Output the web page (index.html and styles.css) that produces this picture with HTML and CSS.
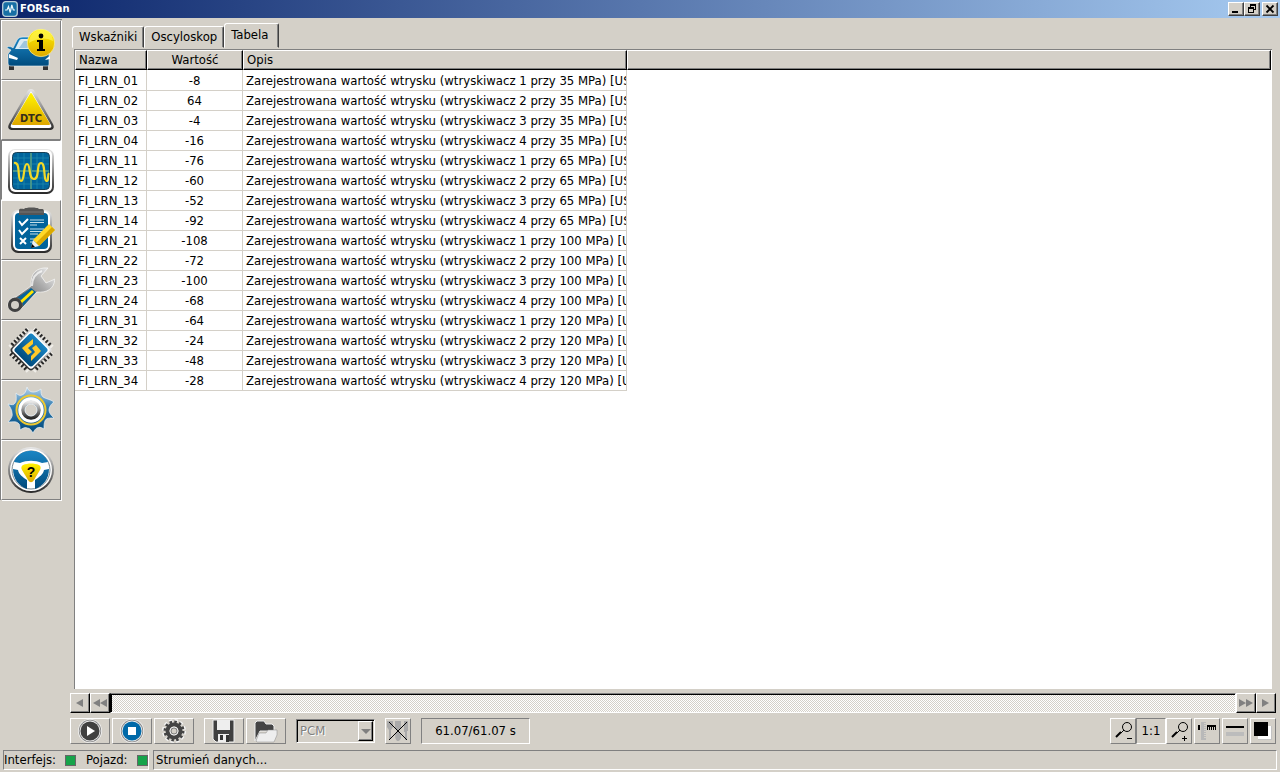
FILE: index.html
```html
<!DOCTYPE html>
<html lang="pl">
<head>
<meta charset="utf-8">
<title>FORScan</title>
<link rel="stylesheet" href="styles.css">
</head>
<body>
<header class="titlebar">
  <svg class="app-logo" viewBox="0 0 16 16"><rect x=".7" y=".7" width="14.6" height="14.6" rx="3" fill="#176fa5" stroke="#b9cdd8" stroke-width="1.3"/><path d="M3 9h2l1.500-3.500 1.700 6 1.600-7.500 1.500 5H13" fill="none" stroke="#e9f6fb" stroke-width="1.200"/></svg>
  <h1>FORScan</h1>
  <div class="window-controls">
    <button class="win-btn" aria-label="Minimalizuj"><svg viewBox="0 0 12 10"><path d="M2 7h6v2H2z"/></svg></button>
    <button class="win-btn" aria-label="Przywróć"><svg viewBox="0 0 12 10"><path d="M4 0h6v6H8V5h1V2H5v1H4zM2 3h6v6H2zm1 2v3h4V5z" fill-rule="evenodd"/></svg></button>
    <button class="win-btn close" aria-label="Zamknij"><svg viewBox="0 0 12 10"><path d="M2.500 1.500l7 7m0-7l-7 7" stroke="#000" stroke-width="1.800"/></svg></button>
  </div>
</header>
<svg class="defs" aria-hidden="true">
  <defs>
    <linearGradient id="blue" x1="0" y1="0" x2="0" y2="1"><stop offset="0" stop-color="#1a85c4"/><stop offset="1" stop-color="#004b7d"/></linearGradient>
    <linearGradient id="metal" x1="0" y1="0" x2="0" y2="1"><stop offset="0" stop-color="#e8e8e8"/><stop offset=".5" stop-color="#888"/><stop offset="1" stop-color="#282828"/></linearGradient>
    <linearGradient id="yellow" x1="0" y1="0" x2="0" y2="1"><stop offset="0" stop-color="#fff200"/><stop offset="1" stop-color="#dfa900"/></linearGradient>
    <linearGradient id="gearblue" x1="0" y1="0" x2="0" y2="1"><stop offset="0" stop-color="#b4d2ea"/><stop offset=".45" stop-color="#2d79ae"/><stop offset="1" stop-color="#00477a"/></linearGradient>
    <linearGradient id="wrench" x1="0" y1="1" x2="1" y2="0"><stop offset="0" stop-color="#222"/><stop offset=".45" stop-color="#888"/><stop offset=".65" stop-color="#aaa"/><stop offset="1" stop-color="#f4f4f4"/></linearGradient>
  </defs>
</svg>
<div class="workspace">
  <nav class="sidebar">
    <button class="side-btn" aria-label="Pojazd">
      <svg viewBox="0 0 48 48"><path d="M2 37h5v7H2zM36 37h5v7h-5z" fill="#333"/><path d="M0 22c0-2 4-2 6 0l4-8c1-2 3-3 6-3h14c4 0 6 2 7 5l5 12v10c0 2-1 2-3 2H4c-2 0-3-1-3-3v-9l3-4z" fill="url(#blue)" stroke="#eef5f9" stroke-width=".6"/><path d="M8 23l4-8c1-2 2-2 4-2h13c3 0 4 2 5 4l2 6z" fill="#dcebf3"/><path d="M12 22l5-7h9v7z" fill="#9fc6de"/><path d="M2 28l9 4-1 2-8-2z" fill="#fff"/><path d="M40 32l3-2v3l-5 1z" fill="#fff"/><circle cx="34" cy="17" r="13.700" fill="url(#yellow)" stroke="#fff8b0" stroke-width=".6"/><path d="M22 17c0-17 24-17 24-2-8-4-16-3-24 2" fill="#fff65b" opacity=".65"/><circle cx="34" cy="10" r="2.400"/><path d="M30 14h6v9h2v2h-8v-2h2v-7h-2z"/></svg>
    </button>
    <button class="side-btn" aria-label="Kody usterek DTC">
      <svg viewBox="0 0 48 48"><path d="M24 3c2 0 3 1 4 3l18 32c2 4 0 6-4 6H6c-4 0-6-2-4-6L20 6c1-2 2-3 4-3z" fill="url(#metal)"/><path d="M24 5L44 39c1 2 0 3-2 3H6c-2 0-3-1-2-3z" fill="#fff"/><path d="M24 8l18 30H6z" fill="url(#yellow)" stroke="url(#yellow)" stroke-width="2" stroke-linejoin="round"/><text x="24" y="36" class="dtc-label">DTC</text></svg>
    </button>
    <button class="side-btn active" aria-label="Strumień danych">
      <svg viewBox="0 0 48 48"><rect x="1" y="3" width="46" height="45" rx="7" fill="url(#metal)"/><rect x="3" y="4" width="42" height="42" rx="5" fill="#fff"/><rect x="5.500" y="6.500" width="37" height="37" rx="4" fill="#00649c" stroke="#173f55"/><path d="M11 7v36M17 7v36M30 7v36M36 7v36M6 12h36M6 18h36M6 32h36M6 38h36" stroke="#208cb0" stroke-width=".7"/><path d="M24 7v36M6 25h36" stroke="#44948b" stroke-width="2"/><path d="M7 17c7-2 3 18 7 18s2-17 6-17 1 15 7 15 2-16 7-16 2 18 6 18c2 0 0-6 2-8" fill="none" stroke="#f3d927" stroke-width="2.200"/></svg>
    </button>
    <button class="side-btn" aria-label="Testy">
      <svg viewBox="0 0 48 48"><rect x="4" y="4" width="41" height="43" rx="7" fill="url(#metal)"/><rect x="6" y="5" width="37" height="40" rx="6" fill="#fff"/><rect x="8" y="7" width="33" height="36" rx="4" fill="#00639b"/><path d="M12 5c0-3 2-2 5-2 1-2 14-2 15 0 3 0 5-1 5 3v3H12z" fill="#555"/><path d="M12 6h25" stroke="#777"/><path d="M12 15l3 4 6-6M12 24l3 4 6-6M13 32l6 6m0-6l-6 6" fill="none" stroke="#fff" stroke-width="2"/><path d="M23 14h14M23 16.500h14M23 19h7M23 23h14M23 25.500h14M23 28h8M23 33h6M23 36h3" stroke="#c5dfe8"/><path d="M42 18l6 6-16 16-6-6z" fill="#ffd928"/><path d="M45 21l3 3-16 16-3-3z" fill="#dba900"/><path d="M26 34l6 6-8 2z" fill="#eee"/><path d="M25 38l3 3-4 1z"/></svg>
    </button>
    <button class="side-btn" aria-label="Serwis">
      <svg viewBox="0 0 48 48"><path d="M24 20C23 7 30 1 41 2l-7 8 5 7 9-4C47 23 40 27 30 26L15 42C10 48 1 46 1 39c0-5 4-8 8-8z" fill="url(#wrench)" stroke="#f8f8f8" stroke-width=".7"/><path d="M24 22l5 4-13 14c0-6-3-8-6-8z" fill="#06639a"/><path d="M25 24l2 2-12 11-2-2z" fill="#ffe500"/><circle cx="8" cy="39" r="7" fill="#414141"/><circle cx="8" cy="39" r="4" fill="#d4d0c8"/><path d="M25 20c0-9 4-13 10-15" fill="none" stroke="#fff" stroke-width="2" opacity=".7"/></svg>
    </button>
    <button class="side-btn" aria-label="Konfiguracja modułów">
      <svg viewBox="0 0 48 48"><g transform="rotate(45 24 24)"><path d="M11 7h27M11 41h27M7 11v27M41 11v27" stroke="#f0eee9" stroke-width="4" stroke-dasharray="2 2"/><path d="M12 7h24M12 41h24M7 12v24M41 12v24" stroke="#292929" stroke-width="4" stroke-dasharray="2 2"/><rect x="8.500" y="8.500" width="31" height="31" rx="4" fill="url(#metal)"/><rect x="10" y="10" width="28" height="28" rx="3" fill="#fff"/><rect x="11.500" y="11.500" width="25" height="25" rx="3" fill="url(#blue)"/></g><path d="M26 13v5l-5 4 4 4-4 3-6-7zM24 35v-5l4-4-3-4 4-3 5 6z" fill="#ffc928"/></svg>
    </button>
    <button class="side-btn" aria-label="Ustawienia">
      <svg viewBox="0 0 48 48"><path d="M20 1c1 3 3 5 6 5 3 0 5-1 8-3 0 4 0 6 2 8 3 2 7 2 11 5-3 2-5 5-5 8s2 5 5 8c-5 0-8 0-9 3-1 2-1 5-1 8-3-2-5-2-7-1-2 1-3 3-4 5-2-3-3-5-6-5-2-1-4 0-7 2 0-3 0-6-2-7-2-2-6-1-10-1 3-3 5-6 4-9 0-3-2-6-4-9 4 1 6 1 7-1 2-2 1-6 1-10 2 2 4 3 6 2 3-1 4-4 5-8z" fill="url(#gearblue)" stroke="#e8f1f6" stroke-width=".7" stroke-linejoin="round"/><circle cx="24" cy="24" r="14.500" fill="none" stroke="#efc92e" stroke-width="2"/><circle cx="24" cy="24" r="11" fill="none" stroke="#fff" stroke-width="3.500"/><circle cx="24" cy="24" r="8" fill="none" stroke="url(#metal)" stroke-width="3.500"/><circle cx="24" cy="24" r="6" fill="#d4d0c8" stroke="#eee"/></svg>
    </button>
    <button class="side-btn" aria-label="Pomoc">
      <svg viewBox="0 0 48 48"><circle cx="24" cy="24" r="23" fill="url(#metal)"/><circle cx="24" cy="24" r="21" fill="#fff"/><circle cx="24" cy="24" r="19" fill="#fff" stroke="#7a8890"/><path d="M7 16C13 1 35 1 41 16l-6 1c-7-3-15-3-22 0zM6 23l5 1c1 5 5 7 9 10v9C12 40 6 33 6 23zM42 23l-5 1c-1 5-5 7-9 10v9c8-3 14-10 14-20z" fill="url(#blue)"/><path d="M16 19c5-2 11-2 16 0 2 1 2 3 1 5l-6 10c-2 3-4 3-6 0l-6-10c-1-2-1-4 1-5z" fill="url(#yellow)"/><text x="24" y="31" class="help-label">?</text></svg>
    </button>
  </nav>
  <main class="content">
    <div class="tabs" role="tablist">
      <button class="tab" role="tab">Wskaźniki</button><button class="tab" role="tab">Oscyloskop</button><button class="tab selected" role="tab" aria-selected="true">Tabela</button>
    </div>
    <section class="data-panel">
      <table>
        <colgroup><col class="name-col"><col class="value-col"><col class="description-col"><col></colgroup>
        <thead><tr><th>Nazwa</th><th class="value">Wartość</th><th>Opis</th><th class="blank"></th></tr></thead>
        <tbody>
          <tr><td>FI_LRN_01</td><td class="value">-8</td><td>Zarejestrowana wartość wtrysku (wtryskiwacz 1 przy 35 MPa) [US]</td></tr>
          <tr><td>FI_LRN_02</td><td class="value">64</td><td>Zarejestrowana wartość wtrysku (wtryskiwacz 2 przy 35 MPa) [US]</td></tr>
          <tr><td>FI_LRN_03</td><td class="value">-4</td><td>Zarejestrowana wartość wtrysku (wtryskiwacz 3 przy 35 MPa) [US]</td></tr>
          <tr><td>FI_LRN_04</td><td class="value">-16</td><td>Zarejestrowana wartość wtrysku (wtryskiwacz 4 przy 35 MPa) [US]</td></tr>
          <tr><td>FI_LRN_11</td><td class="value">-76</td><td>Zarejestrowana wartość wtrysku (wtryskiwacz 1 przy 65 MPa) [US]</td></tr>
          <tr><td>FI_LRN_12</td><td class="value">-60</td><td>Zarejestrowana wartość wtrysku (wtryskiwacz 2 przy 65 MPa) [US]</td></tr>
          <tr><td>FI_LRN_13</td><td class="value">-52</td><td>Zarejestrowana wartość wtrysku (wtryskiwacz 3 przy 65 MPa) [US]</td></tr>
          <tr><td>FI_LRN_14</td><td class="value">-92</td><td>Zarejestrowana wartość wtrysku (wtryskiwacz 4 przy 65 MPa) [US]</td></tr>
          <tr><td>FI_LRN_21</td><td class="value">-108</td><td>Zarejestrowana wartość wtrysku (wtryskiwacz 1 przy 100 MPa) [US]</td></tr>
          <tr><td>FI_LRN_22</td><td class="value">-72</td><td>Zarejestrowana wartość wtrysku (wtryskiwacz 2 przy 100 MPa) [US]</td></tr>
          <tr><td>FI_LRN_23</td><td class="value">-100</td><td>Zarejestrowana wartość wtrysku (wtryskiwacz 3 przy 100 MPa) [US]</td></tr>
          <tr><td>FI_LRN_24</td><td class="value">-68</td><td>Zarejestrowana wartość wtrysku (wtryskiwacz 4 przy 100 MPa) [US]</td></tr>
          <tr><td>FI_LRN_31</td><td class="value">-64</td><td>Zarejestrowana wartość wtrysku (wtryskiwacz 1 przy 120 MPa) [US]</td></tr>
          <tr><td>FI_LRN_32</td><td class="value">-24</td><td>Zarejestrowana wartość wtrysku (wtryskiwacz 2 przy 120 MPa) [US]</td></tr>
          <tr><td>FI_LRN_33</td><td class="value">-48</td><td>Zarejestrowana wartość wtrysku (wtryskiwacz 3 przy 120 MPa) [US]</td></tr>
          <tr><td>FI_LRN_34</td><td class="value">-28</td><td>Zarejestrowana wartość wtrysku (wtryskiwacz 4 przy 120 MPa) [US]</td></tr>
        </tbody>
      </table>
    </section>
    <div class="timeline">
      <button class="scroll-btn" aria-label="Wstecz"><svg viewBox="0 0 16 16"><path d="M11 4v8L4 8z"/></svg></button>
      <button class="scroll-btn" aria-label="Szybko wstecz"><svg viewBox="0 0 16 16"><path d="M8 4v8L1 8zM15 4v8L8 8z"/></svg></button>
      <div class="track"></div>
      <button class="scroll-btn" aria-label="Szybko naprzód"><svg viewBox="0 0 16 16"><path d="M1 4v8l7-4zM8 4v8l7-4z"/></svg></button>
      <button class="scroll-btn" aria-label="Naprzód"><svg viewBox="0 0 16 16"><path d="M4 4v8l7-4z"/></svg></button>
    </div>
    <div class="toolbar">
      <div class="group">
        <button class="tool" aria-label="Start"><svg viewBox="0 0 24 24"><circle cx="12" cy="12" r="12" fill="#f4f4f4"/><circle cx="12" cy="12" r="11.200" fill="#888"/><circle cx="12" cy="12" r="10.400" fill="#eee"/><circle cx="12" cy="12" r="9.500" fill="#404040"/><path d="M9 7v10l8-5z" fill="#fff"/></svg></button>
        <button class="tool" aria-label="Stop"><svg viewBox="0 0 24 24"><circle cx="12" cy="12" r="12" fill="#f4f4f4"/><circle cx="12" cy="12" r="11.200" fill="#888"/><circle cx="12" cy="12" r="10.400" fill="#eee"/><circle cx="12" cy="12" r="9.500" fill="#0069a8"/><path d="M8 8h8v8H8z" fill="#fff"/></svg></button>
        <button class="tool" aria-label="Opcje"><svg viewBox="0 0 24 24"><circle cx="12" cy="12" r="9.500" fill="none" stroke="#f4f4f4" stroke-width="5" stroke-dasharray="3 2"/><circle cx="12" cy="12" r="9" fill="none" stroke="#444" stroke-width="3" stroke-dasharray="2.500 2.212"/><circle cx="12" cy="12" r="6.500" fill="none" stroke="#444" stroke-width="4"/><circle cx="12" cy="12" r="4" fill="#777" stroke="#eee"/><circle cx="12" cy="12" r="2.500" fill="#d4d0c8"/></svg></button>
      </div>
      <div class="group">
        <button class="tool" aria-label="Zapisz"><svg viewBox="0 0 24 24"><path d="M1 1h21v22H4l-3-3z" fill="#404040" stroke="#eee"/><path d="M5 1h13v10H5zM6 15h11v8H6z" fill="#eee"/><path d="M8 16h3v5H8zM14 16h3v7h-3z" fill="#333"/></svg></button>
        <button class="tool" aria-label="Otwórz"><svg viewBox="0 0 24 24"><path d="M1 22V4l2-2h7l2 3h6l2 2v5H6z" fill="#444" stroke="#eee"/><path d="M2 22l3-8h7l2-3h9v5l-3 7H3z" fill="#eee" stroke="#888" stroke-width=".5"/></svg></button>
      </div>
      <div class="module-picker"><select aria-label="Moduł" disabled><option>PCM</option></select><span class="drop"><svg viewBox="0 0 12 12"><path d="M1 4h10L6 9z"/></svg></span></div>
      <button class="tool square" aria-label="Wyczyść zaznaczenie"><svg viewBox="0 0 24 24"><path d="M1 2h6v6L5 11v9H3v-9L1 8zM9 2h6v8h-2v2c4 3 2 10-1 10s-4-7-1-10v-2H9zM18 2h4v10h-1v9h-2v-8h-1z" fill="#aaa"/><path d="M3 3l18 18m0-18L3 21" stroke="#000"/></svg></button>
      <output class="time">61.07/61.07 s</output>
      <div class="view-tools">
        <button class="tool square" aria-label="Pomniejsz"><svg viewBox="0 0 24 24"><circle cx="16" cy="8" r="4.500" fill="none" stroke="#000"/><path d="M13 11l-3 3M16 19.500h5" stroke="#000"/><path d="M10 13l-5 5" stroke="#000" stroke-width="2"/></svg></button><button class="tool ratio" aria-pressed="true">1:1</button><button class="tool square" aria-label="Powiększ"><svg viewBox="0 0 24 24"><circle cx="16" cy="8" r="4.500" fill="none" stroke="#000"/><path d="M13 11l-3 3M15 19.500h5M17.500 17v5" stroke="#000"/><path d="M10 13l-5 5" stroke="#000" stroke-width="2"/></svg></button>
        <button class="tool square spaced" aria-label="Skala"><svg viewBox="0 0 24 24"><path d="M6 3h5v18H6z" fill="#b9b9b9"/><path d="M10 4v16" stroke="#d4d0c8" stroke-dasharray="1 1" stroke-width="2"/><path d="M3 6h2v5H3zM12 6h9v5h-1V8h-1v3h-1V8h-1v3h-1V8h-1v3h-1V8h-1v3h-1z"/></svg></button>
        <button class="tool square spaced" aria-label="Grubość linii"><svg viewBox="0 0 24 24"><path d="M3 7h18v2H3z"/><path d="M3 13h18v4H3z" fill="#bcbcbc"/></svg></button>
        <button class="tool square spaced" aria-label="Kolory"><svg viewBox="0 0 24 24"><path d="M7 7h14v14H7z" fill="#c3c3c3"/><path d="M7 7h13v13H7z" fill="#fff"/><path d="M3 3h14v14H3z"/></svg></button>
      </div>
    </div>
  </main>
</div>
<footer class="statusbar">
  <div class="status-cell devices"><span>Interfejs:</span><i class="lamp"></i><span>Pojazd:</span><i class="lamp"></i></div>
  <div class="status-cell message">Strumień danych...</div>
</footer>
</body>
</html>
```

FILE: styles.css
```css
* { box-sizing: border-box; }
body {
  margin: 0;
  height: 100vh;
  display: flex;
  flex-direction: column;
  background: #d4d0c8;
  color: #000;
  font: 13px/16px "DejaVu Sans Condensed", "DejaVu Sans", sans-serif;
}
button, select { font: inherit; color: inherit; margin: 0; padding: 0; border-radius: 0; }
svg { display: block; }
.defs { position: absolute; width: 0; height: 0; }
.titlebar {
  height: 18px;
  flex: none;
  display: flex;
  align-items: center;
  gap: 2px;
  padding: 0 2px;
  background: linear-gradient(90deg, #0a246a, #a6caf0);
}
.app-logo { width: 16px; height: 16px; }
.titlebar h1 { margin: 0; color: #fff; font-size: 11px; line-height: 16px; }
.window-controls { display: flex; margin-left: auto; }
.win-btn {
  width: 16px;
  height: 14px;
  display: grid;
  place-items: center;
  background: #d4d0c8;
  border: 1px solid;
  border-color: #fff #404040 #404040 #fff;
  box-shadow: inset -1px -1px #808080;
}
.win-btn svg { width: 12px; height: 10px; }
.win-btn.close { margin-left: 2px; }
.workspace { flex: 1; min-height: 0; display: flex; gap: 8px; }
.sidebar {
  width: 62px;
  flex: none;
  align-self: flex-start;
  margin-top: 1px;
  padding-left: 1px;
  border-top: 1px solid #808080;
  box-shadow: inset 1px 0 #808080;
}
.side-btn {
  width: 60px;
  height: 60px;
  display: grid;
  place-items: center;
  background: #d4d0c8;
  border: 1px solid;
  border-color: #fff #808080 #808080 #fff;
  box-shadow: 1px 1px #fff;
}
.side-btn svg { width: 48px; height: 48px; }
.side-btn.active { background: #fff; border-color: #808080 #fff #fff #808080; }
.dtc-label { font: bold 11px "DejaVu Sans Condensed", sans-serif; text-anchor: middle; fill: #332d1b; }
.help-label { font: bold 14px "Liberation Sans", sans-serif; text-anchor: middle; }
.content { flex: 1; min-width: 0; display: flex; flex-direction: column; }
.tabs { height: 31px; flex: none; display: flex; align-items: flex-end; padding: 0 0 1px 2px; }
.tab {
  height: 22px;
  padding: 0 6px;
  background: #d4d0c8;
  border: 1px solid;
  border-color: #fff #404040 transparent #fff;
  border-radius: 3px 2px 0 0;
  box-shadow: inset -1px 0 #808080;
}
.tab.selected { height: 25px; padding: 0 10px 2px 6px; }
.data-panel {
  flex: 1;
  min-height: 0;
  margin: 0 8px 0 4px;
  padding-right: 1px;
  overflow: hidden;
  background: #fff;
  border-top: 1px solid #808080;
  border-left: 1px solid #808080;
}
table { width: 100%; table-layout: fixed; border-collapse: separate; border-spacing: 0; }
.name-col { width: 72px; }
.value-col { width: 96px; }
.description-col { width: 384px; }
th, td { height: 20px; padding: 0 3px; line-height: 18px; text-align: left; white-space: nowrap; overflow: hidden; }
th {
  background: #d4d0c8;
  font-weight: normal;
  border: 1px solid;
  border-color: #fff #000 #000 #fff;
  box-shadow: inset -1px -1px #808080;
}
td { border-right: 1px solid #d4d0c8; border-bottom: 1px solid #d4d0c8; }
tbody tr:first-child td { padding-top: 1px; height: 21px; }
th.value, td.value { text-align: center; padding-left: 0; padding-right: 0; }
.timeline { display: flex; height: 20px; flex: none; margin: 4px 4px 0 0; }
.scroll-btn {
  width: 20px;
  display: grid;
  place-items: center;
  background: #d4d0c8;
  border: 1px solid;
  border-color: #fff #000 #000 #fff;
  box-shadow: inset -1px -1px #808080;
}
.scroll-btn svg { width: 16px; height: 16px; fill: #808080; }
.track {
  flex: 1;
  border: 1px solid;
  border-color: #808080 #fff #fff #000;
  box-shadow: inset 1px 1px #000;
  background: repeating-conic-gradient(#d4d0c8 0 25%, #fff 0 50%) 0 0 / 2px 2px;
}
.toolbar { display: flex; align-items: center; gap: 10px; padding: 5px 4px 6px 0; flex: none; }
.group { display: flex; gap: 2px; }
.tool {
  width: 40px;
  height: 26px;
  display: grid;
  place-items: center;
  background: #d4d0c8;
  border: 1px solid;
  border-color: #fff #808080 #808080 #fff;
}
.tool svg { width: 24px; height: 24px; }
.tool.square { width: 26px; }
.module-picker { position: relative; width: 79px; height: 24px; }
.module-picker select {
  width: 100%;
  height: 100%;
  padding: 0 3px;
  appearance: none;
  background: #d4d0c8;
  color: #808080;
  opacity: 1;
  border: 1px solid;
  border-color: #808080 #fff #fff #808080;
  box-shadow: inset 1px 1px #000;
  text-shadow: 1px 1px #fff;
}
.drop {
  position: absolute;
  top: 2px;
  right: 2px;
  bottom: 2px;
  width: 15px;
  display: grid;
  place-items: center;
  pointer-events: none;
  border: 1px solid;
  border-color: #fff #000 #000 #fff;
  box-shadow: inset -1px -1px #808080;
}
.drop svg { width: 12px; height: 12px; fill: #808080; }
.time {
  width: 109px;
  height: 26px;
  line-height: 24px;
  text-align: center;
  border: 1px solid;
  border-color: #808080 #fff #fff #808080;
}
.view-tools { display: flex; margin-left: auto; }
.tool.ratio { width: 30px; border-color: #808080 #fff #fff #808080; }
.spaced { margin-left: 2px; }
.statusbar { display: flex; gap: 4px; flex: none; padding: 0 3px 2px; }
.status-cell {
  height: 20px;
  line-height: 18px;
  white-space: nowrap;
  border: 1px solid;
  border-color: #808080 #fff #fff #808080;
}
.devices { width: 146px; display: flex; align-items: center; justify-content: space-between; }
.message { flex: 1; padding-left: 2px; }
.lamp { width: 11px; height: 11px; background: #16a34a; border: 1px solid #666; }
```
